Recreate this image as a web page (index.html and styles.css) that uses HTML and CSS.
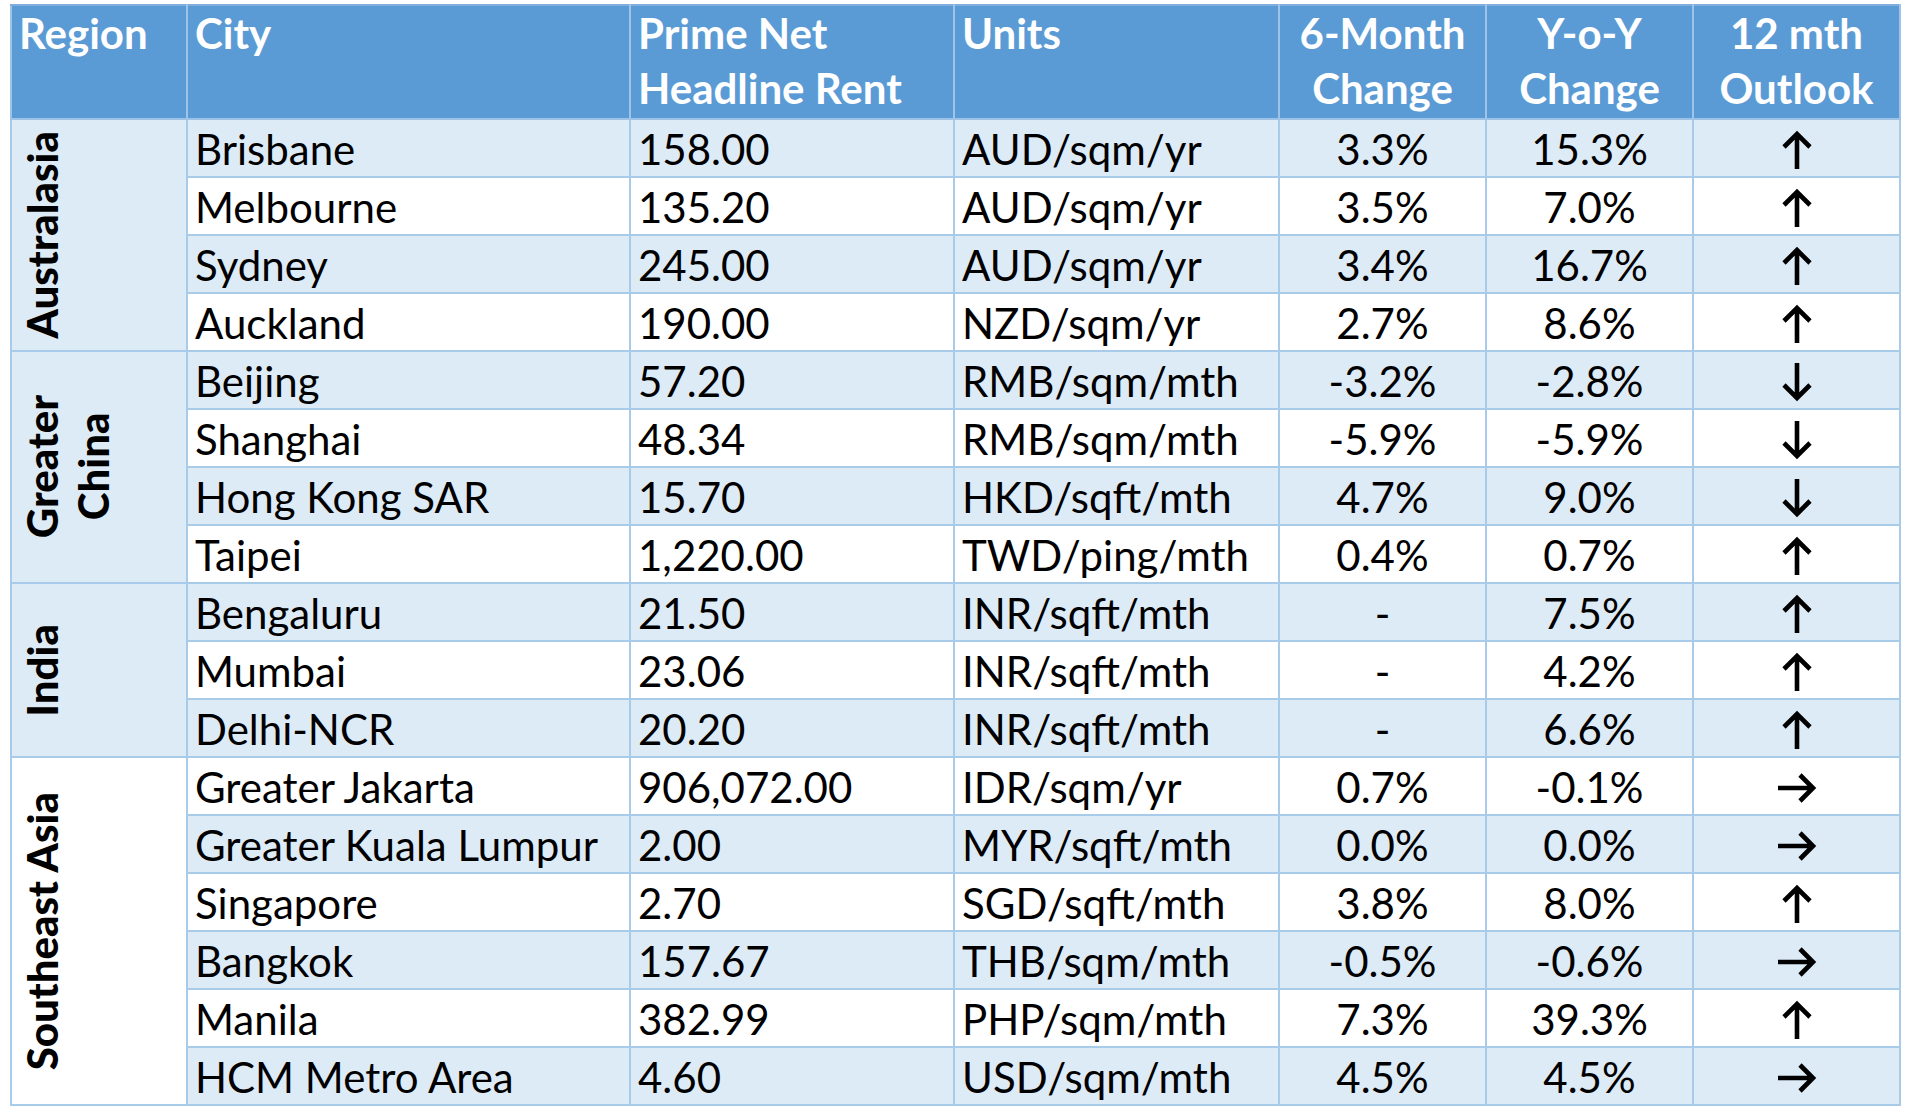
FILE: index.html
```html
<!DOCTYPE html>
<html lang="en">
<head>
<meta charset="utf-8">
<title>Prime Net Headline Rent</title>
<link rel="stylesheet" href="styles.css">
</head>
<body>
<table class="rent">
  <colgroup>
    <col class="c-region"><col class="c-city"><col class="c-rent"><col class="c-units"><col class="c-pct"><col class="c-pct"><col class="c-pct">
  </colgroup>
  <thead>
    <tr>
      <th class="left">Region</th>
      <th class="left">City</th>
      <th class="left">Prime Net<br>Headline Rent</th>
      <th class="left">Units</th>
      <th>6-Month<br>Change</th>
      <th>Y-o-Y<br>Change</th>
      <th>12 mth<br>Outlook</th>
    </tr>
  </thead>
  <tbody>
    <tr class="band">
      <td class="region band" rowspan="4"><div class="vlabel">Australasia</div></td>
      <td>Brisbane</td><td>158.00</td><td>AUD/sqm/yr</td><td class="num">3.3%</td><td class="num">15.3%</td>
      <td class="out"><svg class="arr v" viewBox="0 0 34 40"><path d="M17 39V4M4 17L17 4L30 17"/></svg></td>
    </tr>
    <tr>
      <td>Melbourne</td><td>135.20</td><td>AUD/sqm/yr</td><td class="num">3.5%</td><td class="num">7.0%</td>
      <td class="out"><svg class="arr v" viewBox="0 0 34 40"><path d="M17 39V4M4 17L17 4L30 17"/></svg></td>
    </tr>
    <tr class="band">
      <td>Sydney</td><td>245.00</td><td>AUD/sqm/yr</td><td class="num">3.4%</td><td class="num">16.7%</td>
      <td class="out"><svg class="arr v" viewBox="0 0 34 40"><path d="M17 39V4M4 17L17 4L30 17"/></svg></td>
    </tr>
    <tr>
      <td>Auckland</td><td>190.00</td><td>NZD/sqm/yr</td><td class="num">2.7%</td><td class="num">8.6%</td>
      <td class="out"><svg class="arr v" viewBox="0 0 34 40"><path d="M17 39V4M4 17L17 4L30 17"/></svg></td>
    </tr>
    <tr class="band">
      <td class="region band" rowspan="4"><div class="vlabel">Greater<br>China</div></td>
      <td>Beijing</td><td>57.20</td><td>RMB/sqm/mth</td><td class="num">-3.2%</td><td class="num">-2.8%</td>
      <td class="out"><svg class="arr v" viewBox="0 0 34 40"><path d="M17 1V36M4 23L17 36L30 23"/></svg></td>
    </tr>
    <tr>
      <td>Shanghai</td><td>48.34</td><td>RMB/sqm/mth</td><td class="num">-5.9%</td><td class="num">-5.9%</td>
      <td class="out"><svg class="arr v" viewBox="0 0 34 40"><path d="M17 1V36M4 23L17 36L30 23"/></svg></td>
    </tr>
    <tr class="band">
      <td>Hong Kong SAR</td><td>15.70</td><td>HKD/sqft/mth</td><td class="num">4.7%</td><td class="num">9.0%</td>
      <td class="out"><svg class="arr v" viewBox="0 0 34 40"><path d="M17 1V36M4 23L17 36L30 23"/></svg></td>
    </tr>
    <tr>
      <td>Taipei</td><td>1,220.00</td><td>TWD/ping/mth</td><td class="num">0.4%</td><td class="num">0.7%</td>
      <td class="out"><svg class="arr v" viewBox="0 0 34 40"><path d="M17 39V4M4 17L17 4L30 17"/></svg></td>
    </tr>
    <tr class="band">
      <td class="region band" rowspan="3"><div class="vlabel">India</div></td>
      <td>Bengaluru</td><td>21.50</td><td>INR/sqft/mth</td><td class="num">-</td><td class="num">7.5%</td>
      <td class="out"><svg class="arr v" viewBox="0 0 34 40"><path d="M17 39V4M4 17L17 4L30 17"/></svg></td>
    </tr>
    <tr>
      <td>Mumbai</td><td>23.06</td><td>INR/sqft/mth</td><td class="num">-</td><td class="num">4.2%</td>
      <td class="out"><svg class="arr v" viewBox="0 0 34 40"><path d="M17 39V4M4 17L17 4L30 17"/></svg></td>
    </tr>
    <tr class="band">
      <td>Delhi-NCR</td><td>20.20</td><td>INR/sqft/mth</td><td class="num">-</td><td class="num">6.6%</td>
      <td class="out"><svg class="arr v" viewBox="0 0 34 40"><path d="M17 39V4M4 17L17 4L30 17"/></svg></td>
    </tr>
    <tr>
      <td class="region" rowspan="6"><div class="vlabel">Southeast Asia</div></td>
      <td>Greater Jakarta</td><td>906,072.00</td><td>IDR/sqm/yr</td><td class="num">0.7%</td><td class="num">-0.1%</td>
      <td class="out"><svg class="arr h" viewBox="0 0 40 34"><path d="M1 17H36M23 4L36 17L23 30"/></svg></td>
    </tr>
    <tr class="band">
      <td>Greater Kuala Lumpur</td><td>2.00</td><td>MYR/sqft/mth</td><td class="num">0.0%</td><td class="num">0.0%</td>
      <td class="out"><svg class="arr h" viewBox="0 0 40 34"><path d="M1 17H36M23 4L36 17L23 30"/></svg></td>
    </tr>
    <tr>
      <td>Singapore</td><td>2.70</td><td>SGD/sqft/mth</td><td class="num">3.8%</td><td class="num">8.0%</td>
      <td class="out"><svg class="arr v" viewBox="0 0 34 40"><path d="M17 39V4M4 17L17 4L30 17"/></svg></td>
    </tr>
    <tr class="band">
      <td>Bangkok</td><td>157.67</td><td>THB/sqm/mth</td><td class="num">-0.5%</td><td class="num">-0.6%</td>
      <td class="out"><svg class="arr h" viewBox="0 0 40 34"><path d="M1 17H36M23 4L36 17L23 30"/></svg></td>
    </tr>
    <tr>
      <td>Manila</td><td>382.99</td><td>PHP/sqm/mth</td><td class="num">7.3%</td><td class="num">39.3%</td>
      <td class="out"><svg class="arr v" viewBox="0 0 34 40"><path d="M17 39V4M4 17L17 4L30 17"/></svg></td>
    </tr>
    <tr class="band">
      <td>HCM Metro Area</td><td>4.60</td><td>USD/sqm/mth</td><td class="num">4.5%</td><td class="num">4.5%</td>
      <td class="out"><svg class="arr h" viewBox="0 0 40 34"><path d="M1 17H36M23 4L36 17L23 30"/></svg></td>
    </tr>
  </tbody>
</table>
</body>
</html>
```

FILE: styles.css
```css
html, body {
  margin: 0;
  padding: 0;
  background: #ffffff;
}
body {
  padding: 4px 0 0 10px;
  font-family: Lato, "Liberation Sans", sans-serif;
  color: #000;
}
.rent {
  border-collapse: collapse;
  table-layout: fixed;
  width: 1890px;
  font-size: 42px;
  border: 2px solid #9FC3E7;
}
.c-region { width: 176px; }
.c-city { width: 443px; }
.c-rent { width: 324px; }
.c-units { width: 325px; }
.c-pct { width: 207px; }

.rent th {
  background: #5B9BD5;
  color: #ffffff;
  font-weight: 700;
  line-height: 55px;
  padding: 0 6px 2px;
  text-align: center;
  vertical-align: top;
  border: 2px solid #9FC3E7;
  border-top-color: #7FAEDD;
  white-space: nowrap;
}
.rent th.left {
  text-align: left;
  padding-left: 7px;
}
.rent tbody tr {
  height: 58px;
}
.rent td {
  padding: 0 7px 3px;
  line-height: 48px;
  vertical-align: bottom;
  border: 2px solid #A9CBEA;
  background: #ffffff;
  white-space: nowrap;
}
.rent tr.band td,
.rent td.band {
  background: #DDEBF7;
}
.rent td.region {
  padding: 0 0 0 5px;
  vertical-align: middle;
  font-size: 0;
  line-height: 0;
}
.rent td.region:not(.band) {
  background: #ffffff;
}
.vlabel {
  display: inline-block;
  writing-mode: vertical-rl;
  transform: rotate(180deg);
  text-align: center;
  font-size: 42px;
  font-weight: 900;
  line-height: 51px;
}
.rent td.num {
  text-align: center;
}
.rent td.out {
  vertical-align: middle;
  padding: 3px 0 0;
  line-height: 0;
}
.arr {
  display: block;
  margin: 0 auto;
  fill: none;
  stroke: #000;
  stroke-width: 4.6;
}
.arr.v {
  width: 34px;
  height: 40px;
}
.arr.h {
  width: 40px;
  height: 34px;
}
```
